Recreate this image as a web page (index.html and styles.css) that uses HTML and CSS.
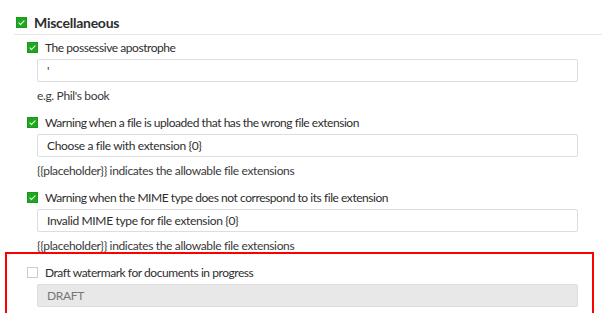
FILE: index.html
```html
<!DOCTYPE html>
<html lang="en">
<head>
    <meta charset="UTF-8">
    <meta name="viewport" content="width=device-width, initial-scale=1.0">
    <title>Miscellaneous</title>
    <link rel="stylesheet" href="styles.css">
</head>
<body>
    <div class="section-header">
        <span class="check checked"></span>
        <h2>Miscellaneous</h2>
    </div>

    <div class="field">
        <div class="field-label">
            <span class="check checked"></span>
            <span>The possessive apostrophe</span>
        </div>
        <input type="text" class="field-input" value="'">
        <div class="hint">e.g. Phil's book</div>
    </div>

    <div class="field">
        <div class="field-label">
            <span class="check checked"></span>
            <span>Warning when a file is uploaded that has the wrong file extension</span>
        </div>
        <input type="text" class="field-input" value="Choose a file with extension {0}">
        <div class="hint">{{placeholder}} indicates the allowable file extensions</div>
    </div>

    <div class="field">
        <div class="field-label">
            <span class="check checked"></span>
            <span>Warning when the MIME type does not correspond to its file extension</span>
        </div>
        <input type="text" class="field-input" value="Invalid MIME type for file extension {0}">
        <div class="hint">{{placeholder}} indicates the allowable file extensions</div>
    </div>

    <div class="field highlighted">
        <div class="field-label">
            <span class="check"></span>
            <span>Draft watermark for documents in progress</span>
        </div>
        <input type="text" class="field-input" value="DRAFT" disabled>
    </div>
</body>
</html>
```

FILE: styles.css
```css
body {
    margin: 0;
    background: #fff;
    color: #2e2e2e;
    font-family: 'Lato', sans-serif;
    font-size: 12px;
    letter-spacing: -0.35px;
    overflow: hidden;
}
.section-header {
    display: flex;
    align-items: center;
    gap: 7px;
    height: 24px;
    margin: 0 0 0 14px;
    padding: 10px 0 0 2px;
    border-bottom: 1px solid #e8e8e8;
}
.section-header h2 {
    margin: 0;
    font-size: 14px;
    font-weight: bold;
    letter-spacing: -0.25px;
    color: #2e2e2e;
}
.check {
    display: inline-block;
    box-sizing: border-box;
    width: 11px;
    height: 11px;
    border: 1px solid #ccc;
    background: #fff;
    flex-shrink: 0;
    position: relative;
}
.check.checked {
    background: #1fa81f;
    border-color: #1a9a1a;
}
.check.checked::after {
    content: "";
    position: absolute;
    left: 3px;
    top: 1px;
    width: 2px;
    height: 5px;
    border: solid #fff;
    border-width: 0 1.5px 1.5px 0;
    transform: rotate(45deg);
}
.field {
    display: flex;
    flex-direction: column;
    margin: 2px 24px 6px 27px;
    position: relative;
}
.field + .field {
    margin-top: 0;
}
.field-label {
    display: flex;
    align-items: center;
    gap: 7px;
    height: 20px;
    letter-spacing: -0.45px;
}
.field-input {
    box-sizing: border-box;
    height: 23px;
    margin: 2px 0 0 10px;
    padding: 0 9px;
    border: 1px solid #ddd;
    border-radius: 2px;
    font-family: inherit;
    font-size: 12px;
    letter-spacing: -0.35px;
    color: #2e2e2e;
    background: #fff;
    outline: none;
}
.field-input:disabled {
    background: #e8e8e8;
    color: #777;
}
.hint {
    margin: 4px 0 0 10px;
    line-height: 20px;
    color: #3a3a3a;
}
.highlighted::before {
    content: "";
    position: absolute;
    top: -10px;
    left: -22px;
    right: -16px;
    bottom: -9px;
    border: 2px solid #f00;
    pointer-events: none;
}
```
